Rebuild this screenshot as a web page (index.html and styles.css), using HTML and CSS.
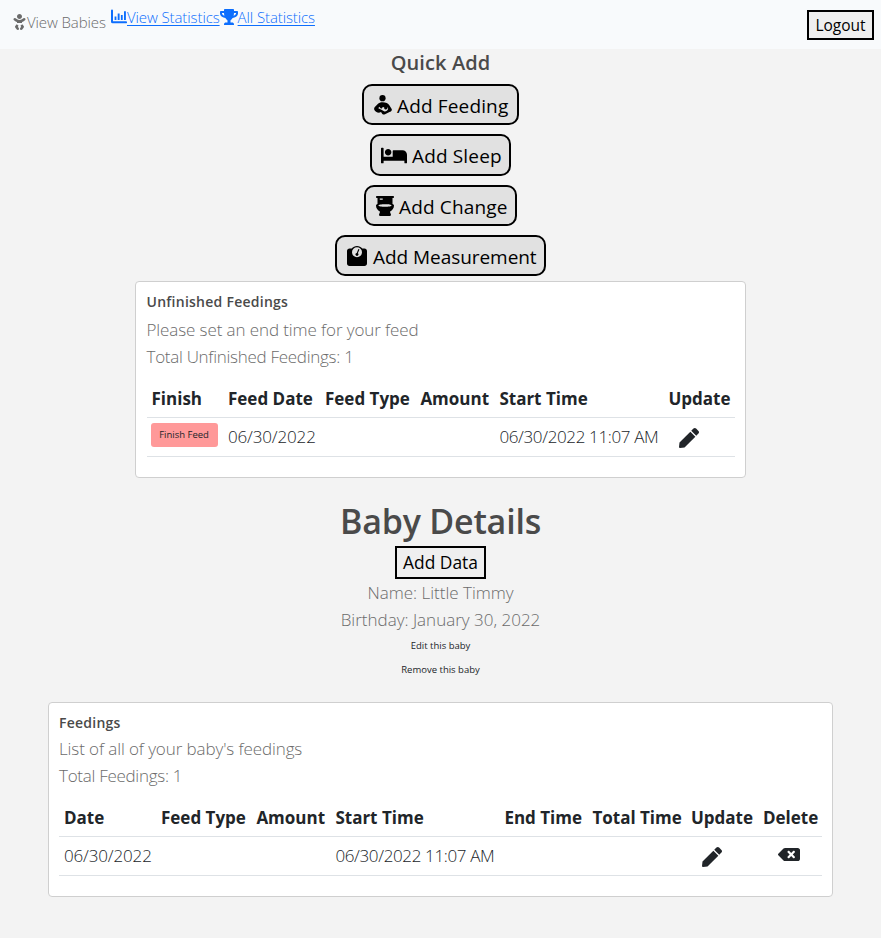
FILE: index.html
```
<!DOCTYPE html>
<html lang="en">
<head>
<meta charset="utf-8">
<title>Baby Details</title>
<link rel="stylesheet" href="styles.css">
</head>
<body>
<nav class="navbar">
  <div class="nav-links">
    <a class="nav-brand"><svg class="icon-baby" viewBox="0 0 384 512"><path d="M192 160c44.2 0 80-35.8 80-80S236.2 0 192 0s-80 35.8-80 80 35.8 80 80 80zm-53.4 248.8l25.6-32-61.5-51.2L56.8 383c-11.4 14.2-11.7 34.4-.8 49l48 64c7.9 10.5 19.9 16 32 16 8.3 0 16.8-2.6 24-8 17.7-13.2 21.2-38.3 8-56l-29.4-39.2zm142.7-83.2l-61.5 51.2 25.6 32L216 448c-13.2 17.7-9.7 42.8 8 56 7.2 5.4 15.6 8 24 8 12.2 0 24.2-5.5 32-16l48-64c10.9-14.6 10.6-34.8-.8-49l-45.9-57.4zM376.7 145c-12.7-18.1-37.6-22.4-55.7-9.8l-40.6 28.5c-52.7 37-124.2 37-176.8 0L63 135.3C44.9 122.6 20 127 7.3 145-5.4 163.1-1 188 17 200.7l40.6 28.5c17 11.9 35.4 20.9 54.4 27.9V288h160v-30.8c19-7 37.4-16 54.4-27.9l40.6-28.5c18.1-12.8 22.4-37.7 9.7-55.8z"/></svg><span>View Babies</span></a>
    <a class="nav-link"><svg class="icon-chart" viewBox="0 0 16 16"><path d="M0 1.5a1 1 0 0 1 2 0V12.2h13a1 1 0 0 1 0 2.1H1.6A1.6 1.6 0 0 1 0 12.700zM3.600 7.500h1.800v3.500H3.600zM6.700 4.500h1.900V11H6.700zM9.900 6h1.800v5H9.900zM13 2.200h1.900V11H13z"/></svg><span class="link-text">View Statistics</span></a>
    <a class="nav-link"><svg class="icon-trophy" viewBox="0 0 576 512"><path d="M552 64H448V24c0-13.300-10.700-24-24-24H152c-13.300 0-24 10.700-24 24v40H24C10.700 64 0 74.700 0 88v56c0 35.700 22.500 72.400 61.900 100.700 31.500 22.700 69.800 37.100 110 41.700C203.300 338.500 240 360 240 360v72h-48c-35.300 0-64 20.700-64 56v12c0 6.600 5.400 12 12 12h296c6.600 0 12-5.400 12-12v-12c0-35.300-28.700-56-64-56h-48v-72s36.700-21.500 68.100-73.600c40.300-4.600 78.600-19 110-41.700 39.300-28.300 61.900-65 61.900-100.700V88c0-13.300-10.700-24-24-24zM99.300 192.800C74.900 175.200 64 155.600 64 144v-16h64.200c1 32.600 5.800 61.200 12.800 86.200-15.100-5.200-29.200-12.400-41.700-21.400zM512 144c0 16.100-17.700 36.100-35.300 48.800-12.500 9-26.700 16.200-41.800 21.400 7-25 11.800-53.600 12.800-86.200H512v16z"/></svg><span class="link-text">All Statistics</span></a>
  </div>
  <button class="btn-outline btn-logout">Logout</button>
</nav>

<main>
  <section class="quick-add">
    <h5 class="quick-title">Quick Add</h5>
    <button class="quick-btn w-feeding"><svg class="icon-feed" viewBox="0 0 18 20"><circle cx="8.500" cy="3.200" r="3.100"/><path fill-rule="evenodd" d="M8.500 7.200C12 7.200 14 8.200 15.500 10.500L17.700 14C18.300 15.500 17 16.800 15.500 17L11 19.300C10 19.800 8.600 19.800 8 18.600L7 17 5.800 17.600C3.500 18 .8 16.500.2 14.500-.1 13.400.5 12.300 1.300 11.600L4.300 8.500C5.500 7.500 7 7.200 8.500 7.200zM5.300 11.800L4.300 13.200 7 14.600 10.500 16.600C13.300 16.300 14.800 14.500 13.800 11.700 14 13.800 12.700 14.700 11.400 14.400 10.300 14.100 9.900 13.300 10.200 12 8.600 12 7.500 12.900 7.300 13.900z"/></svg><span>Add Feeding</span></button>
    <button class="quick-btn w-sleep"><svg class="icon-bed" viewBox="0 64 640 384"><path d="M176 256c44.110 0 80-35.890 80-80s-35.890-80-80-80-80 35.890-80 80 35.890 80 80 80zm352-128H304c-8.840 0-16 7.160-16 16v144H64V80c0-8.840-7.160-16-16-16H16C7.160 64 0 71.160 0 80v352c0 8.840 7.160 16 16 16h32c8.840 0 16-7.160 16-16v-48h512v48c0 8.840 7.160 16 16 16h32c8.840 0 16-7.160 16-16V240c0-61.860-50.140-112-112-112z"/></svg><span>Add Sleep</span></button>
    <button class="quick-btn w-change"><svg class="icon-toilet" viewBox="0 0 384 512" preserveAspectRatio="none"><path d="M368 48c8.800 0 16-7.200 16-16V16c0-8.800-7.200-16-16-16H16C7.200 0 0 7.200 0 16v16c0 8.800 7.200 16 16 16h16v156.700C11.800 214.800 0 226.900 0 240c0 67.200 34.600 126.200 86.800 160.500l-21.400 70.200C59.100 491.200 74.500 512 96 512h192c21.500 0 36.900-20.800 30.600-41.300l-21.400-70.200C349.400 366.200 384 307.200 384 240c0-13.100-11.800-25.200-32-35.300V48h16zM80 72c0-4.400 3.600-8 8-8h48c4.400 0 8 3.600 8 8v16c0 4.400-3.600 8-8 8H88c-4.400 0-8-3.600-8-8V72zm112 200c-77.100 0-139.600-14.300-139.600-32s62.500-32 139.600-32 139.600 14.300 139.600 32-62.500 32-139.600 32z"/></svg><span>Add Change</span></button>
    <button class="quick-btn w-measure"><svg class="icon-weight" viewBox="0 0 512 512"><path fill-rule="evenodd" d="M391.800 64C359.500 24.900 310.700 0 256 0S152.500 24.900 120.200 64H64C28.700 64 0 92.700 0 128V448c0 35.300 28.700 64 64 64H448c35.300 0 64-28.700 64-64V128c0-35.300-28.700-64-64-64zM256 32a128 128 0 1 1 0 256 128 128 0 0 1 0-256z"/><path d="M277 184l42-94-28-11-42 97c-20 4-34 18-34 38 0 23 18 40 41 40s40-17 40-40c0-12-7-23-19-30z"/></svg><span>Add Measurement</span></button>
  </section>

  <section class="card card-unfinished">
    <h6 class="card-title">Unfinished Feedings</h6>
    <p class="card-text">Please set an end time for your feed</p>
    <p class="card-text total">Total Unfinished Feedings: 1</p>
    <table class="table">
      <colgroup><col class="c76"><col class="c97"><col class="c95"><col class="c79"><col class="c169"><col></colgroup>
      <thead><tr><th>Finish</th><th>Feed Date</th><th>Feed Type</th><th>Amount</th><th>Start Time</th><th>Update</th></tr></thead>
      <tbody><tr><td class="cell-finish"><button class="btn-finish">Finish Feed</button></td><td>06/30/2022</td><td></td><td></td><td class="datetime">06/30/2022 11:07 AM</td><td class="cell-pen"><svg class="icon-pen" viewBox="0 0 512 512"><path d="M290.740 93.240l128.020 128.020-277.990 277.990-114.140 12.600C11.350 513.540-1.560 500.620.14 485.340l12.700-114.220 277.900-277.880zm207.200-19.060l-60.110-60.110c-18.750-18.750-49.160-18.750-67.910 0l-56.550 56.550 128.020 128.020 56.550-56.550c18.750-18.760 18.750-49.160 0-67.910z"/></svg></td></tr></tbody>
    </table>
  </section>

  <section class="details">
    <h1 class="details-title">Baby Details</h1>
    <button class="btn-outline btn-data">Add Data</button>
    <p class="details-text">Name: Little Timmy</p>
    <p class="details-text">Birthday: January 30, 2022</p>
    <div class="small-links">
      <a class="small-link">Edit this baby</a>
      <a class="small-link">Remove this baby</a>
    </div>
  </section>

  <section class="card card-feedings">
    <h6 class="card-title">Feedings</h6>
    <p class="card-text">List of all of your baby's feedings</p>
    <p class="card-text total">Total Feedings: 1</p>
    <table class="table">
      <colgroup><col class="c97"><col class="c95"><col class="c79"><col class="c169"><col class="c88"><col class="c99"><col class="c72"><col></colgroup>
      <thead><tr><th>Date</th><th>Feed Type</th><th>Amount</th><th>Start Time</th><th>End Time</th><th>Total Time</th><th>Update</th><th>Delete</th></tr></thead>
      <tbody><tr><td>06/30/2022</td><td></td><td></td><td class="datetime">06/30/2022 11:07 AM</td><td></td><td></td><td class="cell-pen"><svg class="icon-pen" viewBox="0 0 512 512"><path d="M290.740 93.240l128.020 128.020-277.990 277.990-114.140 12.600C11.350 513.540-1.560 500.620.14 485.340l12.700-114.220 277.900-277.880zm207.200-19.060l-60.110-60.110c-18.750-18.750-49.160-18.750-67.910 0l-56.550 56.550 128.020 128.020 56.550-56.550c18.750-18.760 18.750-49.160 0-67.910z"/></svg></td><td class="cell-delete"><svg class="icon-delete" viewBox="0 64 640 384"><path d="M576 64H205.260A63.970 63.970 0 0 0 160 82.750L9.370 233.370c-12.500 12.500-12.500 32.760 0 45.250L160 429.250c12 12 28.280 18.750 45.250 18.750H576c35.350 0 64-28.650 64-64V128c0-35.350-28.650-64-64-64zm-84.690 254.060c6.250 6.250 6.250 16.380 0 22.630l-22.620 22.620c-6.250 6.250-16.380 6.250-22.630 0L384 301.250l-62.060 62.060c-6.250 6.250-16.380 6.250-22.630 0l-22.620-22.620c-6.250-6.250-6.250-16.380 0-22.630L338.750 256l-62.060-62.060c-6.250-6.250-6.250-16.380 0-22.630l22.620-22.620c6.250-6.250 16.380-6.250 22.630 0L384 210.750l62.060-62.060c6.250-6.250 16.380-6.250 22.630 0l22.620 22.620c6.250 6.250 6.250 16.380 0 22.630L429.250 256l62.060 62.060z"/></svg></td></tr></tbody>
    </table>
  </section>
</main>
</body>
</html>
```
FILE: styles.css
```
* { box-sizing: border-box; }

body {
  margin: 0;
  background: #f3f3f3;
  color: #212529;
  font-family: "Open Sans", "Noto Sans", sans-serif;
  font-size: 17px;
  font-weight: 300;
}

h1, h5, h6, p { margin: 0; }
button { font-family: inherit; padding: 0; margin: 0; white-space: nowrap; }
svg { display: block; fill: currentColor; flex: none; }

.navbar {
  display: flex;
  justify-content: space-between;
  align-items: flex-start;
  height: 49px;
  padding: 5px 7px 0 13px;
  background: #f8fafc;
}
.nav-links { display: flex; font-size: 15px; line-height: 24px; letter-spacing: -0.1px; white-space: nowrap; }
.nav-brand { display: flex; align-items: flex-start; width: 98px; padding-top: 5px; color: #6b6b6b; }
.nav-link { display: flex; align-items: flex-start; color: #0d6efd; }
.link-text { text-decoration: underline; text-underline-offset: 2px; }
.icon-baby { width: 13px; height: 16px; margin: 4px 1px 0 0; }
.icon-chart { width: 16px; height: 16px; margin-top: 4px; }
.icon-trophy { width: 18px; height: 16px; margin-top: 4px; }

.btn-outline { border: 2px solid #000; background: #efefef; color: #000; }
.btn-logout { width: 67px; height: 30px; margin-top: 5px; padding-top: 1px; font-size: 15.500px; line-height: 25px; }

.quick-add { display: flex; flex-direction: column; align-items: center; gap: 9px; }
.quick-title { height: 25.800px; color: #4a4a4a; font-size: 20px; font-weight: 600; line-height: 27px; letter-spacing: 0.100px; }
.quick-btn {
  display: flex;
  align-items: center;
  height: 41.400px;
  padding-left: 10px;
  border: 2px solid #000;
  border-radius: 10px;
  background: #e1e1e1;
  color: #000;
  font-size: 19px;
  letter-spacing: 0.150px;
}
.quick-btn span { padding-top: 3px; }
.w-feeding { width: 157px; }
.w-sleep { width: 141px; padding-left: 9px; }
.w-sleep span { padding-top: 2px; }
.w-change { width: 153px; }
.w-measure { width: 211px; letter-spacing: -0.050px; }
.icon-feed { width: 18px; height: 20px; margin: 2px 5px 0 0; }
.icon-bed { width: 26px; height: 17px; margin: 2px 5px 0 0; }
.icon-toilet { width: 18px; height: 20px; margin: 2px 5px 0 0; }
.icon-weight { width: 20px; height: 20px; margin: 1px 6px 0 0; }

.card { margin: 0 auto; padding: 0 10px; border: 1px solid #cfcfcf; border-radius: 4px; background: #fff; }
.card-unfinished { width: 611px; height: 197px; margin-top: 4.600px; padding: 10px 10px 0 10.500px; }
.card-feedings { width: 785px; height: 195px; margin-top: 20px; padding-top: 10px; }
.card-title { color: #4a4a4a; font-size: 14px; font-weight: 600; line-height: 19px; letter-spacing: 0.250px; margin-bottom: 5px; }
.card-feedings .card-title { margin-bottom: 3px; }
.card-text { color: #6b6b6b; line-height: 27px; letter-spacing: -0.100px; }
.card-text.total { letter-spacing: -0.280px; }

.table { width: 100%; margin-top: 9px; border-collapse: separate; border-spacing: 0; table-layout: fixed; }
.table th, .table td {
  height: 39px;
  padding: 0 0 0 5px;
  border-bottom: 1px solid #dee2e6;
  line-height: 27px;
  text-align: left;
  vertical-align: middle;
  white-space: nowrap;
}
.table th { padding-top: 1px; font-weight: 700; }
.table td { padding-bottom: 1px; letter-spacing: -0.150px; }
.table td.datetime { letter-spacing: -0.360px; }
.c72 { width: 72px; }
.c76 { width: 76.500px; }
.c79 { width: 79px; }
.c88 { width: 88px; }
.c95 { width: 95.400px; }
.c97 { width: 97px; }
.c99 { width: 98.600px; }
.c169 { width: 169px; }

.btn-finish {
  display: block;
  width: 67px;
  height: 24px;
  margin-bottom: 3px;
  border: 0;
  border-radius: 3px;
  background: #ff9999;
  color: #212529;
  font-size: 9.500px;
}
.table td.cell-finish { padding-left: 4px; }
.table td.cell-pen { padding-left: 16px; }
.table td.cell-delete { padding-left: 20px; }
.icon-pen { width: 20px; height: 20px; margin-top: 3px; }
.icon-delete { width: 22px; height: 15px; margin-bottom: 1px; }

.details { display: flex; flex-direction: column; align-items: center; padding-top: 20px; }
.details-title { height: 48px; color: #4a4a4a; font-size: 34px; font-weight: 600; line-height: 47px; letter-spacing: -0.200px; }
.btn-data { width: 91px; height: 33px; padding-bottom: 1px; font-size: 17.400px; }
.details-text { color: #6b6b6b; line-height: 27px; }
.small-links { display: flex; flex-direction: column; align-items: center; padding-top: 1px; }
.small-link { color: #212529; font-size: 9.500px; font-weight: 400; line-height: 24px; }
```
